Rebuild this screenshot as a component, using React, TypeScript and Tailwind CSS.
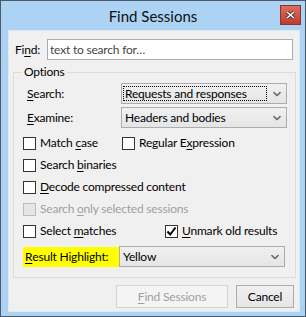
import React from 'react';

const font = "font-['Lato',sans-serif]";

const Chevron = () => (
  <svg width="8" height="5" viewBox="0 0 8 5" className="absolute right-[5px] top-1/2 -translate-y-1/2">
    <polyline points="0.5,0.5 4,4 7.5,0.5" fill="none" stroke="#6d6d6d" strokeWidth="1.6" />
  </svg>
);

const Combo = ({ value, focused, w }: { value: string; focused?: boolean; w: string }) => (
  <div
    className={`relative ${w} h-[21px] border border-[#acacac] bg-gradient-to-b from-[#f0f0f0] to-[#e5e5e5] flex items-center`}
  >
    <div
      className={`ml-[1px] h-[15px] w-[144px] flex items-center pl-[1px] ${
        focused ? 'border border-dotted border-black' : 'border border-transparent'
      }`}
    >
      {value}
    </div>
    <Chevron />
  </div>
);

const Check = ({ checked, disabled, children, w }: { checked?: boolean; disabled?: boolean; children: React.ReactNode; w?: string }) => (
  <div className={`flex items-center h-[22px] ${w ?? ''}`}>
    <div
      className={`w-[13px] h-[13px] border flex items-center justify-center ${
        disabled ? 'border-[#bcbcbc] bg-[#e6e6e6]' : 'border-[#333] bg-white'
      }`}
    >
      {checked && (
        <svg width="11" height="11" viewBox="0 0 11 11">
          <polyline points="1.5,5.5 4.2,8.5 9.5,1.5" fill="none" stroke="#000" strokeWidth="2" />
        </svg>
      )}
    </div>
    <span className={`ml-[4px] ${disabled ? 'text-[#a0a0a0]' : 'text-black'}`}>{children}</span>
  </div>
);

const U = ({ children }: { children: React.ReactNode }) => <span className="underline underline-offset-2">{children}</span>;

export default function App() {
  return (
    <div className={`w-[306px] h-[317px] border border-[#4c5a68] bg-[#acd3f3] flex flex-col ${font} text-[12px] leading-[16px] tracking-[-0.2px] text-black`}>
      {/* title bar */}
      <div className="relative h-[29px] flex items-center justify-center">
        <span className="text-[15px] tracking-normal text-[#111]">Find Sessions</span>
        <div className="absolute right-[4px] top-[4px] w-[21px] h-[20px] border border-[#7a3b35] bg-gradient-to-b from-[#de6c60] to-[#c13a2c] flex items-center justify-center">
          <svg width="9" height="8" viewBox="0 0 9 8">
            <path d="M1 1 L8 7 M8 1 L1 7" stroke="#3a2a2a" strokeWidth="3" />
            <path d="M1 1 L8 7 M8 1 L1 7" stroke="#fff" strokeWidth="1.6" />
          </svg>
        </div>
      </div>

      {/* client area */}
      <div className="ml-[7px] mr-[5px] mb-[4px] flex-1 bg-[#f0f0f0] border border-[#dfe9f2] flex flex-col">
        <div className="mt-[8px] flex items-center">
          <span className="ml-[6px] w-[32px]">
            Fi<U>n</U>d:
          </span>
          <div className="w-[246px] h-[21px] border border-[#abadb3] bg-white flex items-center pl-[2px] text-[#444]">
            text to search for…
          </div>
        </div>

        <fieldset className="mt-[4px] ml-[4px] w-[283px] border border-[#dcdcdc] pl-[9px] pb-[10px]">
          <legend className="-ml-[1px] px-[2px]">Options</legend>
          <div className="mt-[3px] flex items-center">
            <span className="ml-[4px] w-[94px]">
              <U>S</U>earch:
            </span>
            <Combo value="Requests and responses" focused w="w-[166px]" />
          </div>
          <div className="mt-[3px] flex items-center">
            <span className="ml-[4px] w-[94px]">
              <U>E</U>xamine:
            </span>
            <Combo value="Headers and bodies" w="w-[166px]" />
          </div>

          <div className="mt-[4px] flex">
            <Check w="w-[99px]">
              Match <U>c</U>ase
            </Check>
            <Check>
              Regular E<U>x</U>pression
            </Check>
          </div>
          <Check>
            Search <U>b</U>inaries
          </Check>
          <Check>
            <U>D</U>ecode compressed content
          </Check>
          <Check disabled>
            Search <U>o</U>nly selected sessions
          </Check>
          <div className="flex">
            <Check w="w-[142px]">
              Select <U>m</U>atches
            </Check>
            <Check checked>
              <U>U</U>nmark old results
            </Check>
          </div>

          <div className="mt-[4px] flex items-center">
            <div className="w-[96px] h-[20px] bg-[#ffff00] flex items-center pl-[2px]">
              <U>R</U>esult Highlight:
            </div>
            <Combo value="Yellow" w="w-[166px]" />
          </div>
        </fieldset>

        <div className="mt-[7px] flex justify-end gap-[8px] pr-[5px]">
          <div className="w-[112px] h-[23px] border border-[#d3d3d3] bg-[#f4f4f4] flex items-center justify-center text-[#a0a0a0]">
            <U>F</U>ind Sessions
          </div>
          <div className="w-[58px] h-[23px] border border-[#acacac] bg-gradient-to-b from-[#f0f0f0] to-[#e5e5e5] flex items-center justify-center">
            Cancel
          </div>
        </div>
      </div>
    </div>
  );
}
